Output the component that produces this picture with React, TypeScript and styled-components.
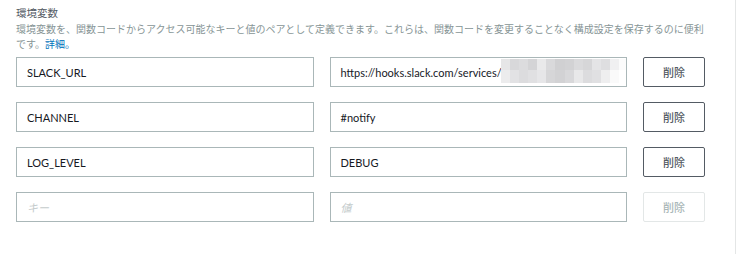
import React from "react";
import styled, { createGlobalStyle } from "styled-components";

const GlobalStyle = createGlobalStyle`
  html, body {
    margin: 0;
    padding: 0;
    background: #ffffff;
  }
  body {
    font-family: "Noto Sans CJK JP", "Noto Sans", sans-serif;
  }
`;

const Page = styled.div`
  box-sizing: border-box;
  width: 736px;
  height: 254px;
  padding: 5px 0 0 16px;
  border-right: 1px solid #e4e6e6;
  background: #ffffff;
`;

const Title = styled.div`
  font-family: "Noto Sans CJK JP", sans-serif;
  font-size: 10.5px;
  line-height: 15px;
  color: #545b64;
`;

const Description = styled.p`
  margin: 1px 0 0 0;
  width: 695px;
  font-family: "Noto Sans CJK JP", sans-serif;
  font-size: 10px;
  line-height: 15px;
  color: #879596;
`;

const Link = styled.a`
  color: #0073bb;
  text-decoration: none;
`;

const Grid = styled.div`
  margin-top: 6px;
  width: 689px;
  display: grid;
  grid-template-columns: 1fr 1fr 62px;
  column-gap: 16px;
  row-gap: 15px;
`;

const Field = styled.div<{ $placeholder?: boolean }>`
  position: relative;
  box-sizing: border-box;
  height: 30px;
  display: flex;
  align-items: center;
  padding: 0 10px;
  border: 1px solid #aab7b8;
  background: #ffffff;
  font-family: ${(p) =>
    p.$placeholder ? `"Noto Sans CJK JP", sans-serif` : `Lato, "Open Sans", sans-serif`};
  font-size: 11px;
  font-style: ${(p) => (p.$placeholder ? "italic" : "normal")};
  color: ${(p) => (p.$placeholder ? "#c4cbcc" : "#16191f")};
  white-space: nowrap;
  overflow: hidden;
`;

const Mosaic = styled.div`
  position: absolute;
  left: 170px;
  top: 1px;
  width: 128px;
  height: 24px;
  display: grid;
  grid-template-columns: repeat(14, 1fr);
  grid-template-rows: 11px 13px;
`;

const Cell = styled.span<{ $c: string }>`
  background: ${(p) => p.$c};
`;

const DeleteButton = styled.button<{ $disabled?: boolean }>`
  box-sizing: border-box;
  height: 30px;
  margin: 0;
  padding: 0;
  border: 1px solid ${(p) => (p.$disabled ? "#e3e7e7" : "#545b64")};
  border-radius: 2px;
  background: #ffffff;
  font-family: "Noto Sans CJK JP", sans-serif;
  font-size: 11px;
  font-weight: 500;
  color: ${(p) => (p.$disabled ? "#aab7b8" : "#545b64")};
  cursor: ${(p) => (p.$disabled ? "default" : "pointer")};
`;

const mosaicColors = [
  "#e6e6e7", "#d8d8da", "#dcdcde", "#d4d4d6", "#e9e9ea", "#d9d9db", "#d0d0d2",
  "#d2d2d4", "#dadadc", "#d6d6d8", "#e4e4e6", "#dedee0", "#f0f0f1", "#fbfbfb",
  "#ececed", "#e2e2e4", "#dcdcde", "#e0e0e2", "#e6e6e8", "#d6d6d8", "#d2d2d4",
  "#d8d8da", "#e8e8e9", "#dcdcde", "#e0e0e2", "#eeeeef", "#fafafa", "#ffffff",
];

const rows = [
  { key: "SLACK_URL", value: "https://hooks.slack.com/services/", masked: true },
  { key: "CHANNEL", value: "#notify" },
  { key: "LOG_LEVEL", value: "DEBUG" },
];

export default function App() {
  return (
    <>
      <GlobalStyle />
      <Page>
        <Title>環境変数</Title>
        <Description>
          環境変数を、関数コードからアクセス可能なキーと値のペアとして定義できます。これらは、関数コードを変更することなく構成設定を保存するのに便利です。
          <Link href="#">詳細。</Link>
        </Description>
        <Grid>
          {rows.map((r) => (
            <React.Fragment key={r.key}>
              <Field>{r.key}</Field>
              <Field>
                {r.value}
                {r.masked && (
                  <Mosaic>
                    {mosaicColors.map((c, i) => (
                      <Cell key={i} $c={c} />
                    ))}
                  </Mosaic>
                )}
              </Field>
              <DeleteButton>削除</DeleteButton>
            </React.Fragment>
          ))}
          <Field $placeholder>キー</Field>
          <Field $placeholder>値</Field>
          <DeleteButton $disabled disabled>
            削除
          </DeleteButton>
        </Grid>
      </Page>
    </>
  );
}
